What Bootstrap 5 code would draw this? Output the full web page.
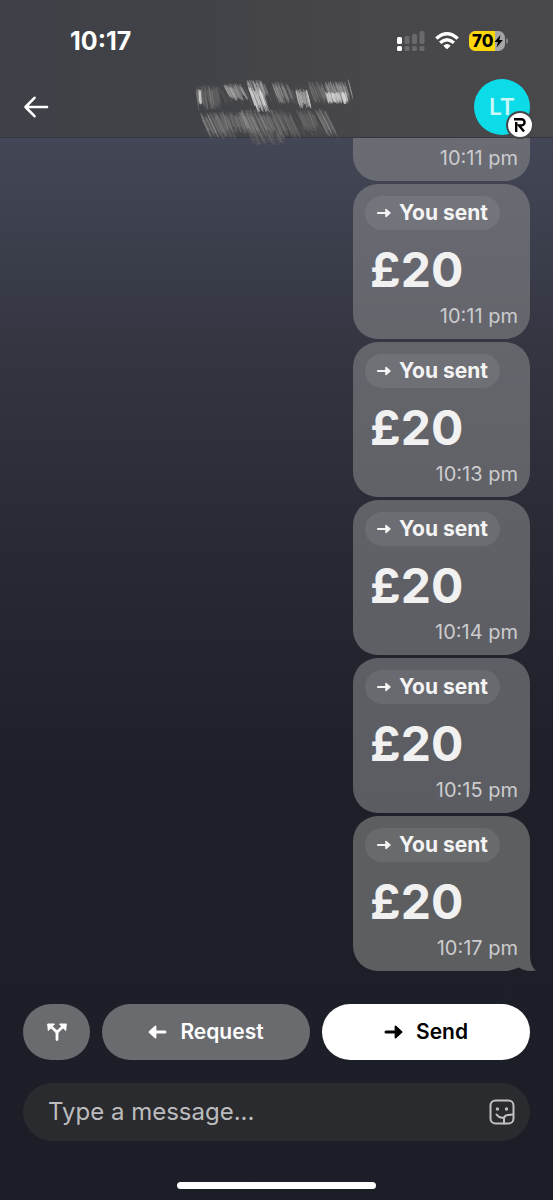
<!DOCTYPE html>
<html lang="en">
<head>
<meta charset="utf-8">
<meta name="viewport" content="width=device-width, initial-scale=1">
<title>Chat</title>
<link href="https://cdn.jsdelivr.net/npm/bootstrap@5.3.0/dist/css/bootstrap.min.css" rel="stylesheet">
<style>
  body {
    font-family: Inter, "Liberation Sans", sans-serif;
    color: #fff;
    background: linear-gradient(180deg, #454859 0%, #434656 12%, #343742 28%, #272a33 46%, #1d2028 64%, #1b1e26 100%) fixed;
  }
  .top-area { height: 138px; background: linear-gradient(90deg, #3f4148 0%, #414247 35%, #47474a 65%, #49494b 100%); border-bottom: 1px solid #36373f; z-index: 2; }
  .status-row { height: 82px; padding: 0 44px 0 70px; }
  .clock { font-size: 25px; font-weight: 700; line-height: 32px; }
  .title-row { height: 50px; padding: 0 23px; }
  .scribble { left: 50%; top: 72px; margin-left: -88px; }
  .avatar { width: 56px; height: 56px; background: #0cdce8; color: #c9f7fa; font-size: 23px; font-weight: 600; }
  .avatar-mark { right: -4px; bottom: -4px; width: 28px; height: 28px; background: #fff; border: 2px solid #45464a; }
  .messages { padding: 0 23px; gap: 3px; min-height: 0; }
  .bubble { width: 177px; height: 155px; border-radius: 25px; background: rgba(131, 131, 134, .62); padding: 12px; flex: none; }
  .bubble-scrolled { height: auto; flex: 1 1 0; min-height: 0; border-top-left-radius: 0; border-top-right-radius: 0; display: flex; flex-direction: column; justify-content: flex-end; padding-bottom: 11px; }
  .bubble-last { background: #5d5e60; }
  .sent-tag { height: 34px; padding: 0 12px 0 11px; gap: 7px; background: rgba(255, 255, 255, .08); font-size: 21px; font-weight: 700; line-height: 34px; color: #f4f4f5; }
  .amount { font-size: 48px; font-weight: 700; line-height: 56px; margin: 12px 0 0 5px; color: #f1f1f2; }
  .sent-at { font-size: 20px; line-height: 24px; color: #ccccce; }
  .amount + .sent-at { margin-top: 6px; }
  .tail { right: -6px; bottom: 0; }
  .actions { padding: 33px 23px 0; gap: 12px; }
  .action { height: 56px; border-radius: 28px; border: 0; background: #6a6b6f; color: #fff; font-size: 21px; font-weight: 600; gap: 13px; }
  .action-split { width: 67px; flex: none; }
  .action-send { background: #fff; color: #000; }
  .composer { margin: 23px 23px 0; height: 58px; border-radius: 29px; background: #2a2b2e; padding: 0 14px 0 25px; }
  .composer input { font-size: 24px; color: #fff; outline: 0; min-width: 0; }
  .composer input::placeholder { color: #bcbcbe; opacity: 1; }
  .home-bar { width: 36%; height: 7px; background: #fff; margin: 41px auto 11px; }
</style>
</head>
<body>
<div class="vh-100 d-flex flex-column overflow-hidden">
  <header class="top-area position-relative flex-shrink-0">
    <div class="status-row d-flex align-items-center justify-content-between">
      <span class="clock">10:17</span>
      <div class="d-flex align-items-center">
        <svg width="28" height="20" viewBox="0 0 28 20" aria-label="Signal">
          <g fill="#fff"><rect x="0" y="6" width="5" height="7" rx="1.5"/><rect x="0" y="15" width="5" height="5" rx="1.5"/></g>
          <g fill="#69696c"><rect x="7.500" y="5" width="5" height="8" rx="1.500"/><rect x="15" y="3" width="5" height="10" rx="1.500"/><rect x="22.500" y="0" width="5" height="13" rx="1.500"/><rect x="7.500" y="15" width="5" height="5" rx="1.500"/><rect x="15" y="15" width="5" height="5" rx="1.500"/><rect x="22.500" y="15" width="5" height="5" rx="1.500"/></g>
        </svg>
        <svg class="ms-2 me-2" width="28" height="20" viewBox="0 0 28 20" aria-label="Wi-Fi">
          <g fill="none" stroke="#fff" stroke-width="3.300"><path d="M3.300 7.600Q14-2 24.700 7.600"/><path d="M7.100 11.800Q14 5.500 20.900 11.800"/></g>
          <path d="M10.300 14.800Q14 11.400 17.700 14.800L14.700 17.800Q14 18.400 13.300 17.800Z" fill="#fff"/>
        </svg>
        <svg width="40" height="20" viewBox="0 0 40 20" role="img" aria-label="Battery 70 percent">
          <defs><clipPath id="cell"><rect width="36" height="20" rx="6.500"/></clipPath></defs>
          <g clip-path="url(#cell)"><rect width="36" height="20" fill="#a4a4a6"/><rect width="26" height="20" fill="#ffd60a"/></g>
          <path d="M37.300 7Q39 8 39 10T37.300 13Z" fill="#9a9a9c"/>
          <text x="3" y="16" font-size="17" font-weight="800" fill="#000">70</text>
          <path d="M31.500 4L25.500 11H29L27.500 16.500L33.800 9H30.300Z" fill="#000"/>
        </svg>
      </div>
    </div>
    <div class="title-row d-flex align-items-center justify-content-between">
      <button class="btn p-0 border-0 text-white d-flex" aria-label="Back">
        <svg width="26" height="24" viewBox="0 0 26 24" fill="none" stroke="currentColor" stroke-width="2.600" stroke-linecap="round" stroke-linejoin="round"><path d="M24 12H2.500M11.500 2.800L2.500 12L11.500 21.200"/></svg>
      </button>
      <div class="avatar rounded-circle position-relative d-flex align-items-center justify-content-center">LT
        <span class="avatar-mark rounded-circle position-absolute d-flex align-items-center justify-content-center">
          <svg width="12" height="14" viewBox="0 0 12 14" fill="none" stroke="#000" stroke-width="2.400"><path d="M0 1.200H7.500A3 3 0 0 1 7.500 7.400H5L10 13.500M2.200 4V14"/></svg>
        </span>
      </div>
    </div>
    <svg class="scribble position-absolute" id="scribble" width="176" height="80" viewBox="0 0 176 80" fill="none" aria-hidden="true"></svg>
  </header>

  <main class="messages flex-grow-1 d-flex flex-column align-items-end justify-content-end overflow-hidden" id="messages"></main>

  <div class="actions d-flex flex-shrink-0">
    <button class="action action-split d-flex align-items-center justify-content-center" aria-label="Split">
      <svg width="20" height="18" viewBox="0 0 20 18"><path d="M10 16.500V11Q10 9 8.400 7.700L4 3.500M10 11Q10 9 11.600 7.700L16 3.500" fill="none" stroke="#fff" stroke-width="2.800" stroke-linecap="round"/><path d="M.7 1H7.500L1.300 7.500ZM19.300 1H12.500L18.700 7.500Z" fill="#fff" stroke="#fff" stroke-linejoin="round"/></svg>
    </button>
    <button class="action flex-fill w-50 d-flex align-items-center justify-content-center">
      <svg width="19" height="14" viewBox="0 0 19 14" fill="currentColor" stroke="currentColor" stroke-linejoin="round" stroke-linecap="round"><path d="M1.500 7L7.500 1.500V12.500Z" stroke-width="1.800"/><path d="M7 7H17" stroke-width="3"/></svg>Request</button>
    <button class="action action-send flex-fill w-50 d-flex align-items-center justify-content-center">
      <svg width="19" height="14" viewBox="0 0 19 14" fill="currentColor" stroke="currentColor" stroke-linejoin="round" stroke-linecap="round"><path d="M17.500 7L11.500 1.500V12.500Z" stroke-width="1.800"/><path d="M12 7H2" stroke-width="3"/></svg>Send</button>
  </div>
  <div class="composer d-flex align-items-center flex-shrink-0">
    <input class="flex-grow-1 bg-transparent border-0 p-0" type="text" placeholder="Type a message..." aria-label="Message">
    <button class="btn p-0 border-0 d-flex" aria-label="Stickers">
      <svg width="28" height="28" viewBox="0 0 28 28" fill="none" stroke="#c2c2c4" stroke-width="2" stroke-linecap="round"><rect x="2.500" y="2.500" width="23" height="23" rx="5"/><path d="M8.500 16.500Q11.500 20.500 16 19.500"/><path d="M25 16.500L20 17Q16 17.500 16 21V25.500"/><circle cx="9.500" cy="11" r=".7"/><circle cx="18.500" cy="11" r=".7"/></svg>
    </button>
  </div>
  <div class="home-bar rounded-pill flex-shrink-0"></div>
</div>
<script src="https://cdn.jsdelivr.net/npm/bootstrap@5.3.0/dist/js/bootstrap.bundle.min.js"></script>
<script>
  // Payment bubbles, oldest first; the first continues under the header
  const times = ['10:11 pm', '10:11 pm', '10:13 pm', '10:14 pm', '10:15 pm', '10:17 pm'];
  const arrow = '<svg width="16" height="12" viewBox="0 0 16 12" fill="currentColor" stroke="currentColor" stroke-linejoin="round" stroke-linecap="round"><path d="M14 6L10 2.500V9.500Z" stroke-width="1.600"/><path d="M10 6H2" stroke-width="2.200"/></svg>';
  const tail = '<svg class="tail position-absolute" width="22" height="28" viewBox="0 0 22 28"><path d="M16 0V12Q16 23 22 27.500Q11 29 5 24.500L0 26L8 8Z" fill="#5d5e60"/></svg>';
  document.getElementById('messages').innerHTML = times.map((t, i) => {
    const last = i === times.length - 1;
    const time = `<div class="sent-at text-end">${t}</div>`;
    return i === 0
      ? `<article class="bubble bubble-scrolled">${time}</article>`
      : `<article class="bubble position-relative${last ? ' bubble-last' : ''}">
          <div class="sent-tag rounded-pill d-inline-flex align-items-center align-top">${arrow}<span>You sent</span></div>
          <div class="amount">£20</div>
          ${time}${last ? tail : ''}
        </article>`;
  }).join('');

  // Pencil hatching over the contact name: x, y, width, height, slant, lightness, opacity
  const patches = [
    [8, 14, 148, 18, 8, 85, .3], [14, 42, 120, 20, 12, 85, .35],
    [6, 14, 24, 22, 3, 115, .5], [9, 18, 3, 14, 1, 225, .6],
    [34, 12, 17, 15, 8, 165, .6], [56, 8, 18, 16, 6, 165, .55], [59, 16, 14, 22, 8, 215, .7],
    [82, 10, 16, 20, 8, 135, .5], [106, 18, 12, 17, 4, 195, .65], [118, 10, 14, 20, 8, 110, .5],
    [130, 10, 26, 18, 6, 160, .5], [136, 20, 21, 11, 3, 215, .7], [158, 6, 1, 20, 5, 170, .6],
    [10, 41, 26, 24, 11, 125, .5], [30, 40, 24, 20, 6, 120, .5], [50, 38, 28, 26, 12, 130, .5],
    [80, 38, 20, 27, 12, 115, .5], [107, 38, 16, 20, 8, 115, .45], [126, 38, 10, 26, 13, 130, .45],
    [58, 58, 32, 14, 6, 95, .45]
  ];
  let seed = 7;
  const rnd = () => (seed = seed * 16807 % 2147483647) / 2147483647;
  document.getElementById('scribble').innerHTML = patches.map(([x, y, w, h, s, l, o]) => {
    let out = '';
    for (let i = 0; i < w * 3; i++) {
      const a = x + rnd() * w, from = rnd() * .35 - .05, to = .7 + rnd() * .4;
      const v = Math.min(235, Math.round(l + (rnd() - .5) * 60));
      out += `<path d="M${a + s * from} ${y + h * from}L${a + s * to} ${y + h * to}" stroke="rgb(${v},${v},${v})" stroke-opacity="${o * (.4 + rnd() * .5)}"/>`;
    }
    return out;
  }).join('');
</script>
</body>
</html>
